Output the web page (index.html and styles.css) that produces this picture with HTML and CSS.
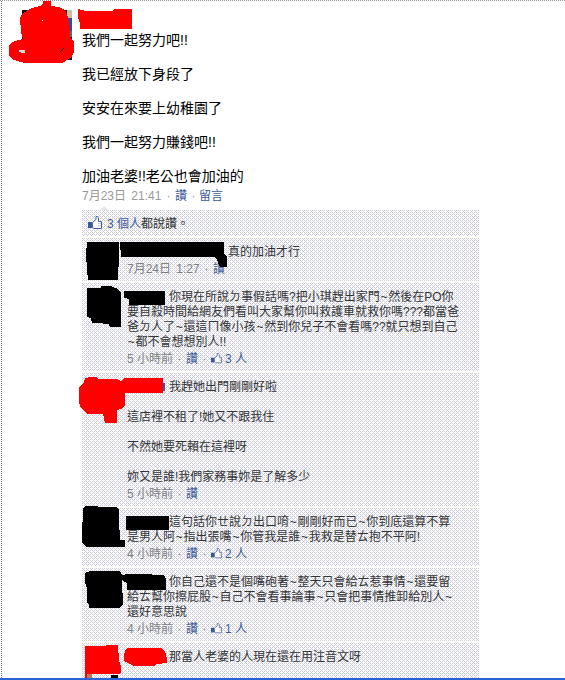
FILE: index.html
```html
<!DOCTYPE html>
<html lang="zh-Hant">
<head>
<meta charset="utf-8">
<title>動態</title>
<link rel="stylesheet" href="styles.css">
</head>
<body>
<svg class="defs" width="0" height="0" aria-hidden="true">
  <symbol id="thumb" viewBox="0 0 14 14">
    <path d="M4.5 6.5L8 3.5V.5H9.5L10.5 2V5.5H13.5V12.5H6L4.5 11.5Z" fill="#fff" stroke="#4864a4"/>
    <path d="M10.5 7.5H13M10.5 9.5H13" stroke="#b9c4dc"/>
    <path d="M0 6H4V12H0Z" fill="#3b5998"/>
  </symbol>
</svg>
<main class="page">
  <article class="post">
    <p>我們一起努力吧!!</p>
    <p>我已經放下身段了</p>
    <p>安安在來要上幼稚園了</p>
    <p>我們一起努力賺錢吧!!</p>
    <p>加油老婆!!老公也會加油的</p>
    <div class="meta post-meta"><span class="date">7月23日 21:41</span><b>·</b><a>讚</a><b>·</b><a>留言</a></div>
  </article>
  <section class="feed">
    <div class="likes"><svg class="big-thumb"><use href="#thumb"/></svg><span><a>3 個人</a>都說讚。</span></div>
    <div class="comment c1">
      <p><span class="name wide"></span>真的加油才行</p>
      <div class="meta"><span class="date">7月24日 1:27</span><b>·</b><a>讚</a></div>
    </div>
    <div class="comment c2">
      <p><span class="name"></span>你現在所說ㄉ事假話嗎?把小琪趕出家門<i>~</i>然後在PO你<br>要自殺時間給網友們看叫大家幫你叫救護車就救你嗎???都當爸<br>爸ㄉ人了<i>~</i>還這ㄇ像小孩<i>~</i>然到你兒子不會看嗎??就只想到自己<br><i>~</i>都不會想想別人!!</p>
      <div class="meta"><span>5 小時前</span><b>·</b><a>讚</a><b>·</b><a class="count"><svg><use href="#thumb"/></svg>3 人</a></div>
    </div>
    <div class="comment c3">
      <p><span class="name"></span>我趕她出門剛剛好啦<br><br>這店裡不租了!她又不跟我住<br><br>不然她要死賴在這裡呀<br><br>妳又是誰!我們家務事妳是了解多少</p>
      <div class="meta"><span>5 小時前</span><b>·</b><a>讚</a></div>
    </div>
    <div class="comment c4">
      <p><span class="name"></span>這句話你ㄝ說ㄉ出口唷<i>~</i>剛剛好而已<i>~</i>你到底還算不算<br>是男人阿<i>~</i>指出張嘴<i>~</i>你管我是誰<i>~</i>我救是替ㄊ抱不平阿!</p>
      <div class="meta"><span>4 小時前</span><b>·</b><a>讚</a><b>·</b><a class="count"><svg><use href="#thumb"/></svg>2 人</a></div>
    </div>
    <div class="comment c5">
      <p><span class="name"></span>你自己還不是個嘴砲著<i>~</i>整天只會給ㄊ惹事情<i>~</i>還要留<br>給ㄊ幫你擦屁股<i>~</i>自己不會看事論事<i>~</i>只會把事情推卸給別人<i>~</i><br>還好意思說</p>
      <div class="meta"><span>4 小時前</span><b>·</b><a>讚</a><b>·</b><a class="count"><svg><use href="#thumb"/></svg>1 人</a></div>
    </div>
    <div class="comment c6">
      <p><span class="name"></span>那當人老婆的人現在還在用注音文呀</p>
    </div>
  </section>
  <svg class="marks" width="565" height="680" shape-rendering="crispEdges" aria-hidden="true">
    <path d="M22 10H72V60H22Z" fill="#111"/>
    <path d="M67 10H72V18H67Z" fill="#c9bfa5"/><path d="M68 18H72V31H68Z" fill="#1853b5"/><path d="M69 31H72V37H69Z" fill="#666"/>
    <g fill="#f00">
      <path d="M43 1H51V6L59 7L65 10L67 14L69 20L70 30V38L74 42V52L71 58L62 63H25L14 60L9 56V45L12 42L23 39L21 32L20 18L23 13L32 8L40 6L43 4Z"/>
      <path d="M78 9L86 11H112L115 9H132V29H80V23L78 17Z"/>
      <path d="M85 378L90 377H96L98 379H117L121 381L125 378H163V393H125V405L121 409L117 410V423H105L103 414H88L81 408L79 403V387L84 383Z"/>
      <path d="M85 646H105L107 645H118L119 661L121 666V672L119 674H92L90 678H85Z"/>
      <path d="M126 649L128 648H161L165 651L167 659V663L157 664L154 666H134L130 664L124 661V655Z"/>
    </g>
    <path d="M19 50H25V53H21V52H19Z" fill="#ddd"/><path d="M42 20H43V21H42Z" fill="#fff"/><path d="M60 51H62V49H64V48H63V50H61V52H60Z"/>
    <path d="M87 674H92V678H87Z" fill="#b47866"/><path d="M111 675H118V678H111Z"/>
    <path d="M163 383H165V391H163Z" fill="#3b5998"/>
    <g>
      <path d="M87 242H119V255L118 280H88L87 270L86 254Z"/>
      <path d="M120 242H224V254L227 257V267H220L217 260L214 257H121V250H120Z"/>
      <path d="M87 288H101V286H112V287L118 289L121 293V327H110L109 324H104L102 323H92L91 318L87 317Z"/>
      <path d="M124 291H165V305H129V299L124 298Z"/>
      <path d="M83 508L86 506H97L98 507H116L119 510V520L120 540H125V547H86L85 545L82 543V526L83 518Z"/>
      <path d="M126 516H169V530H126Z"/>
      <path d="M85 573L90 571H120L122 575L128 574H139L164 575L166 579V590H127V583L122 580L123 605L119 608H89V605L87 603V588L85 582Z"/>
    </g>
  </svg>
</main>
<div class="bar"></div>
</body>
</html>
```
FILE: styles.css
```css
* { box-sizing: border-box; margin: 0; padding: 0; }
body {
  width: 565px;
  height: 680px;
  overflow: hidden;
  background: #fff;
  font-family: "Liberation Sans", "Noto Sans CJK TC", sans-serif;
  font-size: 12px;
  line-height: 15px;
  color: #333;
}
.defs { position: absolute; }
.page {
  position: relative;
  height: 678px;
  overflow: hidden;
  padding-left: 82px;
  border-top: 1px dotted #999;
}
.page::before {
  content: "";
  position: absolute;
  left: 1px;
  top: 0;
  bottom: 0;
  border-left: 1px dotted #777;
}
.marks { position: absolute; left: 0; top: -1px; }
p { white-space: nowrap; }
.post { height: 209px; padding-top: 31px; color: #000; }
.post p { font-size: 14px; line-height: 17px; margin-bottom: 17px; }
.post p:last-of-type { margin-bottom: 4px; }
.meta { display: flex; white-space: nowrap; color: #808080; height: 15px; margin-top: 2px; }
.post-meta { color: #999; margin-top: 0; }
.post-meta .date { width: 80px; }
.comment .date { width: 73px; }
.post-meta .date, .comment .date { word-spacing: 2px; }
.meta b { width: 13px; text-align: center; font-weight: normal; }
a { color: #3b5998; }
.post-meta b + a:last-child { margin-left: -1px; }
.feed { width: 397px; }
.likes, .comment {
  margin-bottom: 2px;
  background: #fff url("data:image/svg+xml,%3Csvg xmlns='http://www.w3.org/2000/svg' width='4' height='4' shape-rendering='crispEdges'%3E%3Cpath d='M0 0h1v1H0zM2 0h1v1H2zM0 2h1v1H0zM2 2h1v1H2z' fill='%23cdcdd2'/%3E%3Cpath d='M1 1h1v1H1zM3 3h1v1H3z' fill='%23ccccff'/%3E%3C/svg%3E");
}
.likes { position: relative; height: 26px; display: flex; align-items: center; padding: 2px 0 0 6px; gap: 5px; }
.likes::before {
  content: "";
  position: absolute;
  left: 18px;
  top: -4px;
  border: 4px solid transparent;
  border-top: 0;
  border-bottom-color: #e5e5ed;
}
.big-thumb { width: 14px; height: 14px; margin-top: -3px; }
.comment { padding: 7px 0 0 45px; }
.c1 { height: 43px; }
.c2 { height: 88px; }
.c3 { height: 133px; }
.c4 { height: 58px; }
.c5 { height: 73px; }
.c6 { height: 36px; }
.name { display: inline-block; width: 42px; }
.name.wide { width: 101px; }
i { display: inline-block; width: 8.6px; text-align: center; font-style: normal; }
.count { display: flex; gap: 3px; }
.count svg { width: 11px; height: 11px; margin-top: 1px; }
.bar { height: 2px; background: #2a62d8; }
```
